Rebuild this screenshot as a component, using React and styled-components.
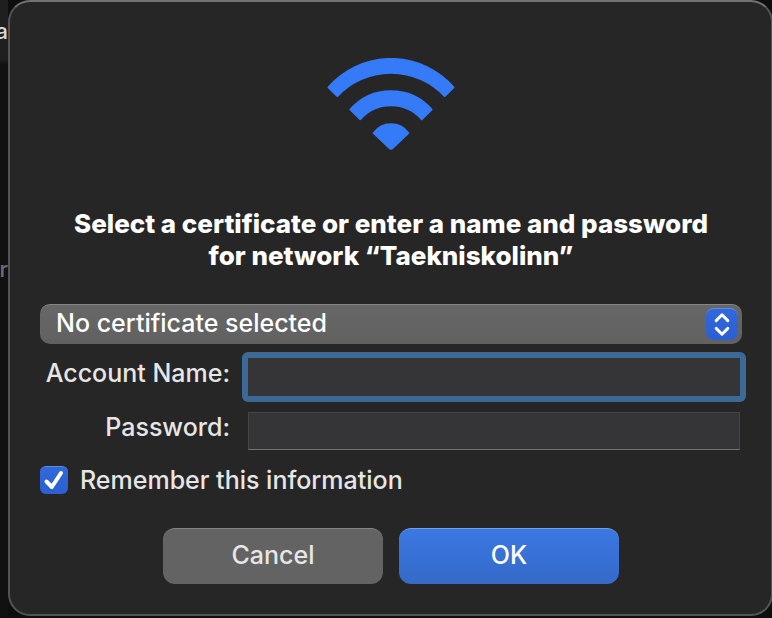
import { useState } from 'react';
import styled, { createGlobalStyle } from 'styled-components';

const GlobalStyle = createGlobalStyle`
    * {
        box-sizing: border-box;
    }

    body {
        margin: 0;
        background: #0e0e0e;
        color: #e6e6e6;
        font-family: Inter, "Liberation Sans", sans-serif;
        font-size: 25px;
        font-weight: 500;
        line-height: 30px;
        overflow-x: hidden;
    }
`;

const Desktop = styled.div`
    display: grid;
    grid-template-columns: 8px minmax(0, 1fr);
    align-items: stretch;
`;

const WindowBehind = styled.div`
    display: flex;
    flex-direction: column;
    gap: 208px;
    align-items: flex-end;
    padding-top: 16px;
    overflow: hidden;
    background: linear-gradient(#1f1f1f 60px, #111111 64px);
    font-size: 22px;
`;

const BehindText = styled.span`
    color: ${(props) => (props.$dim ? '#6e6e6e' : '#d8d8d8')};
`;

const Dialog = styled.form`
    display: flex;
    flex-direction: column;
    margin-right: -1px;
    padding: 56px 29px 30px 30px;
    background: #262626;
    border: 2px solid #545454;
    border-top-color: #727272;
    border-radius: 22px;
`;

const WifiIcon = styled.svg`
    align-self: center;
    width: 128px;
    height: 92px;
    fill: #357af6;
    stroke: #357af6;
    stroke-width: 2;
    stroke-linejoin: round;
`;

const Title = styled.h1`
    margin: 58px 0 32px;
    color: #ffffff;
    font-size: 26px;
    font-weight: 800;
    line-height: 32px;
    text-align: center;
`;

const SelectContainer = styled.div`
    position: relative;
    display: flex;
`;

const CertificateSelect = styled.select`
    appearance: none;
    width: 100%;
    height: 40px;
    padding: 0 48px 4px 16px;
    background: linear-gradient(#676767, #616161);
    border: 0;
    border-top: 1px solid #858585;
    border-radius: 10px;
    outline: none;
    color: #ffffff;
    font: inherit;
`;

const SelectArrows = styled.svg`
    position: absolute;
    top: 4px;
    right: 4px;
    width: 32px;
    height: 32px;
    background: linear-gradient(#3168dc, #2b5fd2);
    border-top: 1px solid #5b8be4;
    border-radius: 8px;
    fill: none;
    stroke: #ffffff;
    stroke-width: 3;
    stroke-linecap: round;
    stroke-linejoin: round;
    pointer-events: none;
`;

const Fields = styled.div`
    display: grid;
    grid-template-columns: 190px minmax(0, 1fr);
    gap: 10px 12px;
    align-items: center;
    margin: 8px -4px 16px 0;
`;

const FieldLabel = styled.label`
    padding-bottom: 8px;
    text-align: right;
    white-space: nowrap;
`;

const Field = styled.input`
    min-width: 0;
    height: 38px;
    margin: 0 6px;
    padding: 0 6px;
    background: #353537;
    border: 1px solid #454547;
    border-bottom-color: #737375;
    outline: none;
    color: #ffffff;
    font: inherit;
`;

const FocusedField = styled(Field)`
    height: 50px;
    margin: 0;
    border: 6px solid #3c6996;
    border-radius: 6px;
`;

const RememberLabel = styled.label`
    display: flex;
    align-items: center;
    gap: 12px;
    height: 28px;
`;

const CheckboxContainer = styled.span`
    position: relative;
    display: flex;
`;

const Checkbox = styled.input`
    appearance: none;
    width: 28px;
    height: 28px;
    margin: 0;
    background: #535355;
    border-radius: 6px;

    &:checked {
        background: linear-gradient(#3168dc, #2b5fd2);
        border-top: 1px solid #5b8be4;
    }
`;

const CheckMark = styled.svg`
    position: absolute;
    inset: 0;
    fill: none;
    stroke: #ffffff;
    stroke-width: 4;
    stroke-linecap: round;
    stroke-linejoin: round;
    pointer-events: none;
`;

const Buttons = styled.div`
    display: flex;
    justify-content: center;
    gap: 16px;
    margin-top: 34px;
`;

const Button = styled.button`
    width: 220px;
    height: 56px;
    padding: 0 0 4px;
    background: ${(props) => (props.$primary ? 'linear-gradient(#3a78e2, #356ac8)' : '#636363')};
    border: 0;
    border-top: 1px solid ${(props) => (props.$primary ? '#729fe9' : '#858585')};
    border-radius: 12px;
    color: ${(props) => (props.$primary ? '#ffffff' : '#e6e6e6')};
    font: inherit;
`;

export default function App() {
    const [remember, setRemember] = useState(true);

    return (
        <>
            <GlobalStyle />
            <Desktop>
                <WindowBehind>
                    <BehindText>a</BehindText>
                    <BehindText $dim>r</BehindText>
                </WindowBehind>
                <Dialog onSubmit={(e) => e.preventDefault()}>
                    <WifiIcon viewBox="0 0 128 92" aria-hidden="true">
                        <path d="M1.5 29.3A83 83 0 0 1 126.5 29.3L117.7 38A73.5 73.5 0 0 0 10.3 38Z" />
                        <path d="M23.5 51.5A54 54 0 0 1 104.5 51.5L94.7 61.2A40.8 40.8 0 0 0 33.3 61.2Z" />
                        <path d="M46.7 75A21.5 21.5 0 0 1 81.3 75L65 90.5Q64 91.2 63 90.5Z" />
                    </WifiIcon>
                    <Title>
                        Select a certificate or enter a name and password
                        <br />
                        for network “Taekniskolinn”
                    </Title>
                    <SelectContainer>
                        <CertificateSelect aria-label="Certificate">
                            <option>No certificate selected</option>
                        </CertificateSelect>
                        <SelectArrows viewBox="0 0 32 32" aria-hidden="true">
                            <path d="M10 12L16 6L22 12M10 20L16 26L22 20" />
                        </SelectArrows>
                    </SelectContainer>
                    <Fields>
                        <FieldLabel htmlFor="account">Account Name:</FieldLabel>
                        <FocusedField id="account" type="text" />
                        <FieldLabel htmlFor="password">Password:</FieldLabel>
                        <Field id="password" type="password" />
                    </Fields>
                    <RememberLabel>
                        <CheckboxContainer>
                            <Checkbox
                                type="checkbox"
                                checked={remember}
                                onChange={(e) => setRemember(e.target.checked)}
                            />
                            {remember && (
                                <CheckMark viewBox="0 0 28 28" aria-hidden="true">
                                    <path d="M6.5 15.5L11.8 21L21 7" />
                                </CheckMark>
                            )}
                        </CheckboxContainer>
                        Remember this information
                    </RememberLabel>
                    <Buttons>
                        <Button type="button">Cancel</Button>
                        <Button type="submit" $primary>OK</Button>
                    </Buttons>
                </Dialog>
            </Desktop>
        </>
    );
}
